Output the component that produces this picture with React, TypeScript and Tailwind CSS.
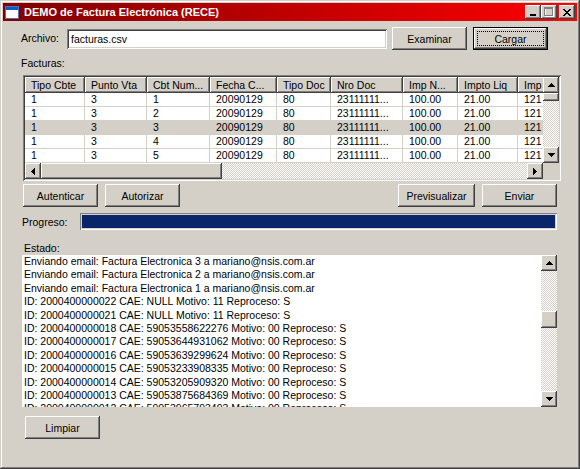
import React from 'react';

const raised =
  'shadow-[inset_-1px_-1px_#404040,inset_1px_1px_#ffffff,inset_-2px_-2px_#808080,inset_2px_2px_#d4d0c8]';
const sunken =
  'shadow-[inset_1px_1px_#808080,inset_-1px_-1px_#ffffff,inset_2px_2px_#404040,inset_-2px_-2px_#d4d0c8]';
const dither = 'bg-[repeating-conic-gradient(#ffffff_0%_25%,#d4d0c8_0%_50%)] bg-[length:2px_2px]';

function Tri({ dir }: { dir: 'up' | 'down' | 'left' | 'right' }) {
  const rects = [0, 1, 2, 3].map(i => {
    const k = dir === 'up' || dir === 'left' ? i : 3 - i;
    if (dir === 'up' || dir === 'down') return <rect key={i} x={3 - k} y={i} width={2 * k + 1} height={1} />;
    return <rect key={i} x={i} y={3 - k} width={1} height={2 * k + 1} />;
  });
  const vert = dir === 'up' || dir === 'down';
  return (
    <svg width={vert ? 7 : 4} height={vert ? 4 : 7} shapeRendering="crispEdges" fill="#000">
      {rects}
    </svg>
  );
}

function ArrowBtn({ dir }: { dir: 'up' | 'down' | 'left' | 'right' }) {
  return (
    <div className={`w-[16px] h-[16px] shrink-0 bg-[#d4d0c8] flex items-center justify-center ${raised}`}>
      <Tri dir={dir} />
    </div>
  );
}

function Button({ label, w, def }: { label: string; w: string; def?: boolean }) {
  if (def) {
    return (
      <div className={`${w} h-[23px] border border-black shrink-0`}>
        <div className={`relative h-full bg-[#d4d0c8] flex items-center justify-center ${raised}`}>
          {label}
          <div className="absolute inset-[3px] border border-dotted border-black" />
        </div>
      </div>
    );
  }
  return (
    <div className={`${w} h-[23px] shrink-0 bg-[#d4d0c8] flex items-center justify-center ${raised}`}>{label}</div>
  );
}

function CloseGlyph() {
  return (
    <svg width="8" height="7" shapeRendering="crispEdges" fill="#000">
      {[0, 1, 2, 3, 4, 5, 6].map(i => (
        <g key={i}>
          <rect x={i} y={i} width={2} height={1} />
          <rect x={6 - i} y={i} width={2} height={1} />
        </g>
      ))}
    </svg>
  );
}

const columns = [
  { h: 'Tipo Cbte', w: 'w-[60px]' },
  { h: 'Punto Vta', w: 'w-[62px]' },
  { h: 'Cbt Num...', w: 'w-[63px]' },
  { h: 'Fecha C...', w: 'w-[67px]' },
  { h: 'Tipo Doc', w: 'w-[54px]' },
  { h: 'Nro Doc', w: 'w-[72px]' },
  { h: 'Imp N...', w: 'w-[55px]' },
  { h: 'Impto Liq', w: 'w-[60px]' },
  { h: 'Imp', w: 'w-[60px]' },
];

const rows = [1, 2, 3, 4, 5].map(n => ['1', '3', String(n), '20090129', '80', '23111111...', '100.00', '21.00', '121']);

const log = [
  'Enviando email: Factura Electronica 3 a mariano@nsis.com.ar',
  'Enviando email: Factura Electronica 2 a mariano@nsis.com.ar',
  'Enviando email: Factura Electronica 1 a mariano@nsis.com.ar',
  'ID: 2000400000022 CAE: NULL Motivo: 11 Reproceso: S',
  'ID: 2000400000021 CAE: NULL Motivo: 11 Reproceso: S',
  'ID: 2000400000018 CAE: 59053558622276 Motivo: 00 Reproceso: S',
  'ID: 2000400000017 CAE: 59053644931062 Motivo: 00 Reproceso: S',
  'ID: 2000400000016 CAE: 59053639299624 Motivo: 00 Reproceso: S',
  'ID: 2000400000015 CAE: 59053233908335 Motivo: 00 Reproceso: S',
  'ID: 2000400000014 CAE: 59053205909320 Motivo: 00 Reproceso: S',
  'ID: 2000400000013 CAE: 59053875684369 Motivo: 00 Reproceso: S',
  'ID: 2000400000012 CAE: 59053965793493 Motivo: 00 Reproceso: S',
];

export default function App() {
  return (
    <div
      className={`w-[580px] h-[469px] bg-[#d4d0c8] flex flex-col overflow-hidden text-[10.5px] leading-[14px] text-black font-['Liberation_Sans',Arial,sans-serif] shadow-[inset_-1px_-1px_#404040,inset_1px_1px_#d4d0c8,inset_-2px_-2px_#808080,inset_2px_2px_#ffffff]`}
    >
      {/* title bar */}
      <div className="mx-[3px] mt-[3px] h-[18px] flex items-center bg-[linear-gradient(to_right,#800000,#ff0000)]">
        <svg width="14" height="13" className="ml-[2px]" shapeRendering="crispEdges">
          <rect x="0" y="0" width="14" height="13" fill="#5a6f9a" />
          <rect x="1" y="1" width="12" height="11" fill="#ffffff" />
          <rect x="1" y="1" width="12" height="3" fill="#0a5bd0" />
        </svg>
        <span className="ml-[5px] text-[11px] font-bold text-white">DEMO de Factura Electrónica (RECE)</span>
        <div className="ml-auto mr-[2px] flex items-center">
          <div className={`w-[16px] h-[14px] bg-[#d4d0c8] flex items-end justify-center pb-[3px] pr-[1px] ${raised}`}>
            <div className="w-[6px] h-[2px] bg-black" />
          </div>
          <div className={`w-[16px] h-[14px] bg-[#d4d0c8] flex items-center justify-center ${raised}`}>
            <svg width="10" height="10" shapeRendering="crispEdges">
              <rect x="1.5" y="1.5" width="8" height="8" fill="none" stroke="#ffffff" />
              <rect x="0.5" y="0.5" width="8" height="8" fill="none" stroke="#808080" />
              <rect x="0" y="1" width="9" height="1" fill="#808080" />
            </svg>
          </div>
          <div className={`ml-[2px] w-[16px] h-[14px] bg-[#d4d0c8] flex items-center justify-center pr-[1px] ${raised}`}>
            <CloseGlyph />
          </div>
        </div>
      </div>

      {/* archivo */}
      <div className="mt-[6px] ml-[21px] h-[23px] flex items-center">
        <span className="w-[46px] shrink-0 -mt-[2px]">Archivo:</span>
        <div className={`w-[320px] h-[20px] bg-white flex items-center pl-[4px] ${sunken}`}>facturas.csv</div>
        <div className="ml-[5px]">
          <Button label="Examinar" w="w-[75px]" />
        </div>
        <div className="ml-[6px]">
          <Button label="Cargar" w="w-[75px]" def />
        </div>
      </div>

      <div className="mt-[6px] ml-[21px]">Facturas:</div>

      {/* grid */}
      <div className={`mt-[5px] ml-[23px] w-[538px] h-[106px] p-[2px] bg-white flex flex-col ${sunken}`}>
        <div className="flex h-[86px]">
          <div className="w-[518px] overflow-hidden">
            <div className="flex h-[16px]">
              {columns.map(c => (
                <div key={c.h} className={`${c.w} shrink-0 h-[16px] bg-[#d4d0c8] pl-[6px] flex items-center whitespace-nowrap ${raised}`}>
                  {c.h}
                </div>
              ))}
            </div>
            {rows.map((r, ri) => (
              <div key={ri} className={`flex h-[14px] ${ri === 2 ? 'bg-[#d4d0c8]' : 'bg-white'}`}>
                {r.map((v, ci) => (
                  <div
                    key={ci}
                    className={`${columns[ci].w} shrink-0 h-[14px] pl-[6px] leading-[13px] border-r border-b border-[#d4d0c8] whitespace-nowrap overflow-hidden`}
                  >
                    {v}
                  </div>
                ))}
              </div>
            ))}
          </div>
          <div className="w-[16px] flex flex-col">
            <ArrowBtn dir="up" />
            <div className={`h-[8px] bg-[#d4d0c8] ${raised}`} />
            <div className={`flex-1 ${dither}`} />
            <ArrowBtn dir="down" />
          </div>
        </div>
        <div className="flex h-[16px]">
          <ArrowBtn dir="left" />
          <div className={`w-[181px] bg-[#d4d0c8] ${raised}`} />
          <div className={`flex-1 ${dither}`} />
          <ArrowBtn dir="right" />
          <div className="w-[16px] bg-[#d4d0c8]" />
        </div>
      </div>

      {/* actions */}
      <div className="mt-[3px] ml-[23px] w-[534px] flex">
        <Button label="Autenticar" w="w-[75px]" />
        <div className="ml-[7px]">
          <Button label="Autorizar" w="w-[75px]" />
        </div>
        <div className="ml-auto">
          <Button label="Previsualizar" w="w-[77px]" />
        </div>
        <div className="ml-[7px]">
          <Button label="Enviar" w="w-[75px]" />
        </div>
      </div>

      {/* progress */}
      <div className="mt-[6px] ml-[22px] flex items-center">
        <span className="w-[58px] shrink-0">Progreso:</span>
        <div className="w-[477px] h-[17px] p-[2px] shadow-[inset_1px_1px_#808080,inset_-1px_-1px_#ffffff]">
          <div className="h-full w-full bg-[#0a246a]" />
        </div>
      </div>

      <div className="mt-[11px] ml-[24px]">Estado:</div>

      {/* status */}
      <div className="ml-[22px] w-[535px] h-[152px] flex">
        <div className="flex-1 bg-white overflow-hidden pl-[2px] leading-[13.4px] whitespace-nowrap">
          {log.map((l, i) => (
            <div key={i}>{l}</div>
          ))}
        </div>
        <div className="w-[16px] flex flex-col">
          <ArrowBtn dir="up" />
          <div className={`h-[40px] ${dither}`} />
          <div className={`h-[17px] bg-[#d4d0c8] ${raised}`} />
          <div className={`flex-1 ${dither}`} />
          <ArrowBtn dir="down" />
        </div>
      </div>

      <div className="mt-[9px] ml-[25px]">
        <Button label="Limpiar" w="w-[75px]" />
      </div>
    </div>
  );
}
